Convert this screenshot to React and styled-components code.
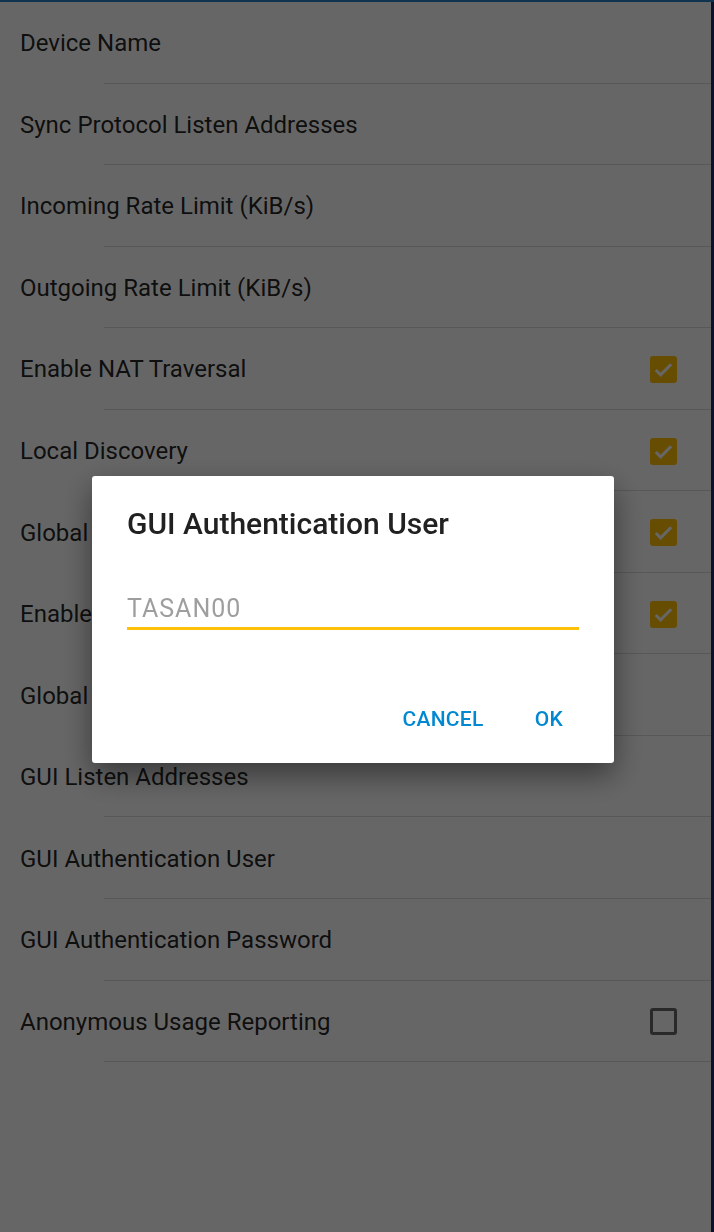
import styled, { createGlobalStyle } from "styled-components";

const GlobalStyle = createGlobalStyle`
  html, body {
    margin: 0;
    padding: 0;
    background: #ffffff;
  }
  body {
    font-family: Roboto, "Noto Sans", sans-serif;
    overflow: hidden;
  }
`;

const Screen = styled.div`
  display: flex;
  width: 714px;
  height: 1232px;
  background: #ffffff;
  border-top: 2px solid #2a7fc8;
  box-sizing: border-box;
`;

const List = styled.div`
  flex: 1;
  display: flex;
  flex-direction: column;
`;

const EdgeStrip = styled.div`
  width: 3px;
  background: #1c2c6a;
`;

const Row = styled.div`
  position: relative;
  display: flex;
  align-items: center;
  justify-content: space-between;
  height: 81.55px;
  padding: 1px 34px 0 20px;
  box-sizing: border-box;
  font-size: 24px;
  color: rgba(0, 0, 0, 0.87);

  &::after {
    content: "";
    position: absolute;
    left: 104px;
    right: 0;
    bottom: 0;
    height: 1px;
    background: rgba(0, 0, 0, 0.14);
  }
`;

const Box = styled.span`
  display: flex;
  align-items: center;
  justify-content: center;
  width: 27px;
  height: 27px;
  box-sizing: border-box;
  border-radius: 3px;
  background: ${(p) => (p.checked ? "#ffc107" : "transparent")};
  border: ${(p) => (p.checked ? "none" : "3px solid rgba(0,0,0,0.6)")};
`;

const Scrim = styled.div`
  position: fixed;
  inset: 0;
  background: rgba(0, 0, 0, 0.6);
`;

const Dialog = styled.div`
  position: fixed;
  left: 92px;
  top: 476px;
  width: 522px;
  height: 287px;
  box-sizing: border-box;
  background: #ffffff;
  border-radius: 3px;
  box-shadow: 0 12px 30px rgba(0, 0, 0, 0.45);
  padding: 30px 35px 0 35px;
  display: flex;
  flex-direction: column;
`;

const Title = styled.div`
  font-size: 30px;
  font-weight: 500;
  color: #212121;
  line-height: 36px;
`;

const Field = styled.div`
  margin-top: 51px;
  padding-bottom: 2px;
  border-bottom: 3px solid #ffc107;
  font-size: 25px;
  letter-spacing: 1px;
  color: #9e9e9e;
  line-height: 32px;
`;

const Actions = styled.div`
  display: flex;
  justify-content: flex-end;
  gap: 51px;
  margin-top: 77px;
  padding-right: 16px;
  line-height: 24px;
`;

const Action = styled.span`
  font-size: 21px;
  font-weight: 500;
  color: #0288d1;
  letter-spacing: 0.3px;
`;

const rows = [
  { label: "Device Name" },
  { label: "Sync Protocol Listen Addresses" },
  { label: "Incoming Rate Limit (KiB/s)" },
  { label: "Outgoing Rate Limit (KiB/s)" },
  { label: "Enable NAT Traversal", check: true },
  { label: "Local Discovery", check: true },
  { label: "Global Discovery", check: true },
  { label: "Enable Relaying", check: true },
  { label: "Global Discovery Servers" },
  { label: "GUI Listen Addresses" },
  { label: "GUI Authentication User" },
  { label: "GUI Authentication Password" },
  { label: "Anonymous Usage Reporting", check: false },
];

const Check = ({ checked }) => (
  <Box checked={checked}>
    {checked && (
      <svg width="23" height="23" viewBox="0 0 24 24">
        <path
          d="M4 12.5l5 5L20 6.5"
          fill="none"
          stroke="#ffffff"
          strokeWidth="3.2"
        />
      </svg>
    )}
  </Box>
);

const App = () => {
  return (
    <>
      <GlobalStyle />
      <Screen>
        <List>
          {rows.map((r) => (
            <Row key={r.label}>
              <span>{r.label}</span>
              {r.check !== undefined && <Check checked={r.check} />}
            </Row>
          ))}
        </List>
        <EdgeStrip />
      </Screen>
      <Scrim />
      <Dialog>
        <Title>GUI Authentication User</Title>
        <Field>TASAN00</Field>
        <Actions>
          <Action>CANCEL</Action>
          <Action>OK</Action>
        </Actions>
      </Dialog>
    </>
  );
};

export default App;
